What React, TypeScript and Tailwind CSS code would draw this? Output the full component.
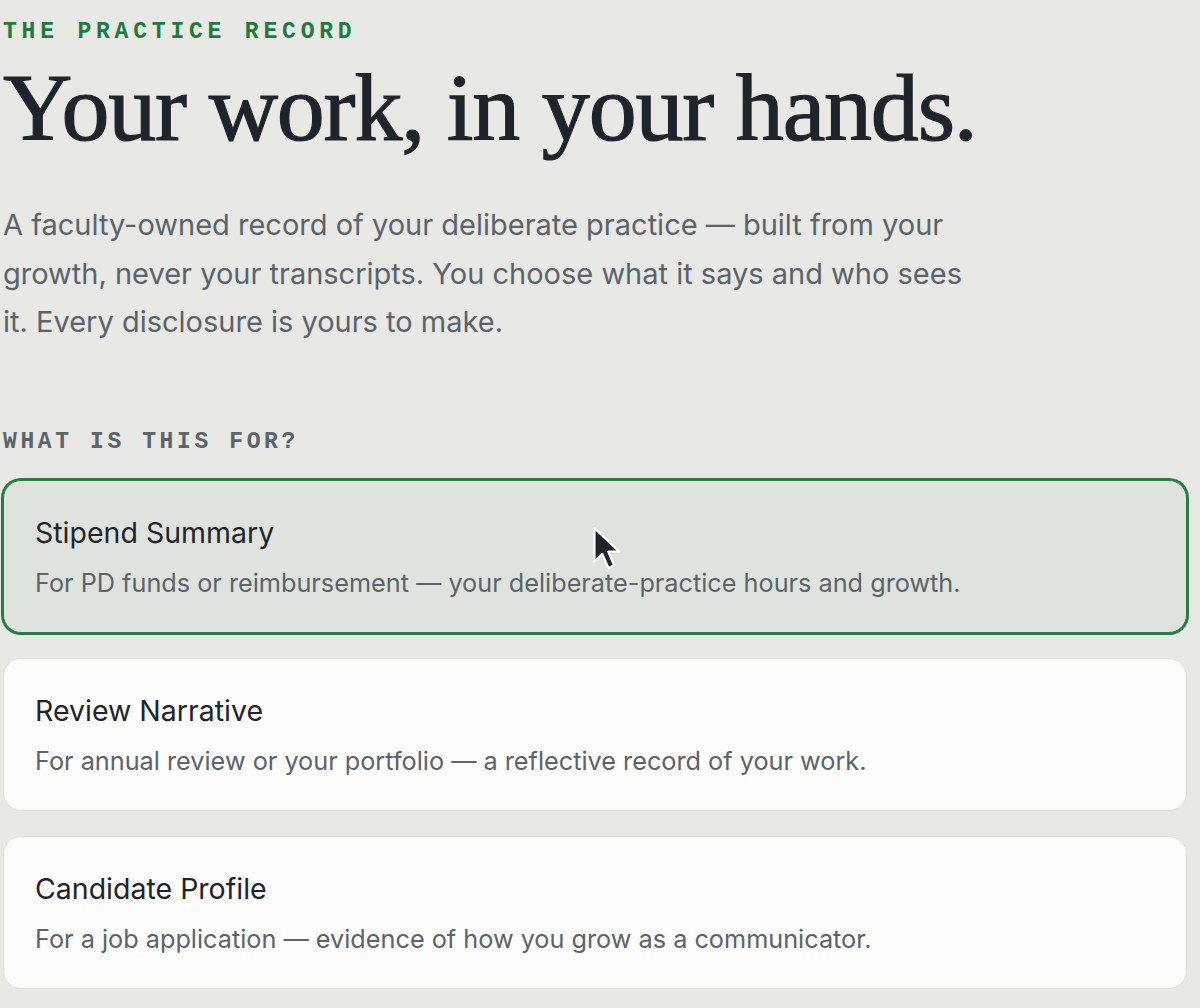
import { useState } from "react";

type Purpose = {
  id: string;
  title: string;
  blurb: string;
};

const purposes: Purpose[] = [
  {
    id: "stipend",
    title: "Stipend Summary",
    blurb: "For PD funds or reimbursement — your deliberate-practice hours and growth.",
  },
  {
    id: "review",
    title: "Review Narrative",
    blurb: "For annual review or your portfolio — a reflective record of your work.",
  },
  {
    id: "candidate",
    title: "Candidate Profile",
    blurb: "For a job application — evidence of how you grow as a communicator.",
  },
];

const sans = "font-['Inter','Noto_Sans',sans-serif]";
const mono = "font-['Liberation_Mono','DejaVu_Sans_Mono',monospace]";

function Pointer() {
  return (
    <svg width="36" height="48" viewBox="0 0 17 23" className="pointer-events-none absolute left-[587px] top-[44px]">
      <path
        d="M1.5 1.5 L1.5 17.5 L5.3 13.9 L8.2 20.6 L11 19.4 L8.2 12.8 L13.5 12.8 Z"
        fill="#1f232b"
        stroke="#ffffff"
        strokeWidth="1.1"
        strokeLinejoin="round"
      />
    </svg>
  );
}

function PurposeCard({ purpose, selected, onSelect }: { purpose: Purpose; selected: boolean; onSelect: () => void }) {
  return (
    <button
      type="button"
      onClick={onSelect}
      className={
        selected
          ? "relative w-full rounded-[18px] border border-[#2f7d47] bg-[#dfe3de] px-[31px] pt-[34px] pb-[34px] text-left ring-2 ring-[#2a7a43]"
          : "relative w-full rounded-[18px] border border-[#e0e0dc] bg-[#fcfcfa] px-[31px] pt-[34px] pb-[34px] text-left"
      }
    >
      <div className="text-[28.5px] leading-[36px] text-[#1f232b]">{purpose.title}</div>
      <div className="mt-[17px] text-[25.25px] leading-[30px] text-[#5b636b]">{purpose.blurb}</div>
      {selected && <Pointer />}
    </button>
  );
}

export default function App() {
  const [selected, setSelected] = useState("stipend");

  return (
    <div className={`min-h-screen bg-[#e8e8e4] pl-[3px] pr-[13px] pt-[21px] ${sans}`}>
      <div className={`${mono} text-[23px] font-bold uppercase leading-none tracking-[4.8px] text-[#1f7a3f]`}>
        The Practice Record
      </div>

      <h1 className="mt-[16px] font-['Liberation_Serif','DejaVu_Serif',serif] text-[96px] leading-none tracking-[-1.2px] text-[#1f232b] [-webkit-text-stroke:1.2px_#1f232b]">
        Your work, in your hands.
      </h1>

      <p className="mt-[45px] max-w-[964px] text-[29px] leading-[48.5px] text-[#5b636b]">
        A faculty-owned record of your deliberate practice — built from your growth, never your transcripts. You
        choose what it says and who sees it. Every disclosure is yours to make.
      </p>

      <div className={`mt-[84px] ${mono} text-[23px] font-bold uppercase leading-none tracking-[3.6px] text-[#5b636b]`}>
        What is this for?
      </div>

      <div className="mt-[26px] flex flex-col gap-[25px]">
        {purposes.map((p) => (
          <PurposeCard key={p.id} purpose={p} selected={p.id === selected} onSelect={() => setSelected(p.id)} />
        ))}
      </div>
    </div>
  );
}
